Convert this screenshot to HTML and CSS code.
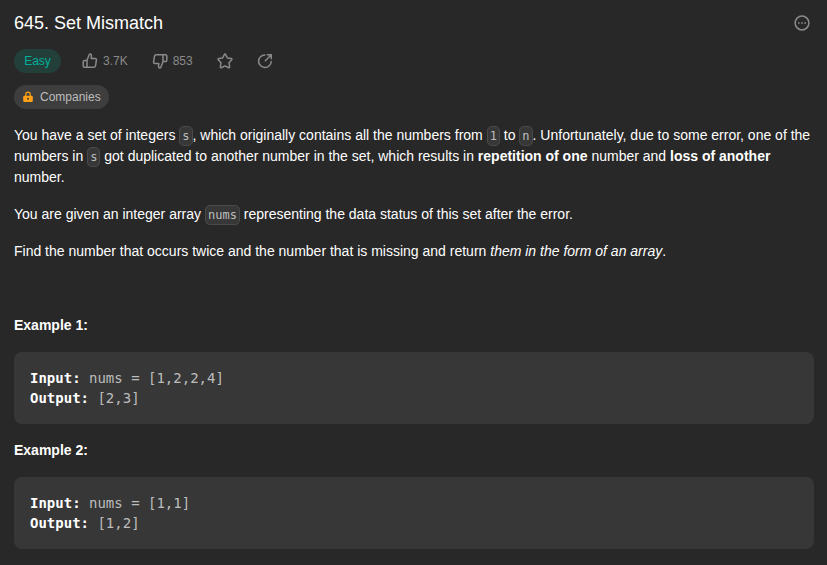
FILE: index.html
```
<!DOCTYPE html>
<html lang="en">
<head>
<meta charset="utf-8">
<title>645. Set Mismatch</title>
<link rel="stylesheet" href="styles.css">
</head>
<body>
<main class="problem">
  <header class="heading">
    <h1>645. Set Mismatch</h1>
    <svg class="icon" viewBox="0 0 18 18"><circle cx="9" cy="9" r="6.900"/><path class="dots" d="M5 8.200h1.600v1.600H5zM8.200 8.200h1.600v1.600H8.200zM11.400 8.200H13v1.600h-1.600z"/></svg>
  </header>
  <div class="stats">
    <span class="difficulty">Easy</span>
    <span class="stat up"><svg class="icon" viewBox="0 0 18 18"><path d="M6 15.300V8.200L8.300 2.500Q8.700 1.700 9.500 2Q10.600 2.500 10.500 3.800L10.200 6.400H14Q15.700 6.400 15.400 8.200L14.500 13.800Q14.200 15.300 12.800 15.300H3.400Q2.200 15.300 2.200 14.100V9.700Q2.200 8.500 3.400 8.500H6"/></svg>3.7K</span>
    <span class="stat down"><svg class="icon" viewBox="0 0 18 18"><path d="M12 2.700V9.800L9.700 15.500Q9.300 16.300 8.500 16Q7.400 15.500 7.500 14.200L7.800 11.600H4Q2.300 11.600 2.600 9.800L3.500 4.200Q3.800 2.700 5.200 2.700H14.600Q15.800 2.700 15.800 3.900V8.300Q15.800 9.500 14.600 9.500H12"/></svg>853</span>
    <svg class="icon star" viewBox="0 0 18 18"><path d="M8.200 2.800Q9 1.400 9.800 2.800L11.400 6 15 6.600Q16.600 6.900 15.500 8.100L13 10.700 13.600 14.500Q13.800 16.100 12.300 15.500L9 13.900 5.700 15.500Q4.200 16.100 4.400 14.500L5 10.700 2.500 8.100Q1.400 6.900 3 6.600L6.600 6Z"/></svg>
    <svg class="icon share" viewBox="0 0 18 18"><path d="M8.900 2.900A6.300 6.300 0 1 0 15.200 9.400M9.300 8.700 15.300 2.700M11.300 2.700H15.300V6.700"/></svg>
  </div>
  <div class="companies">
    <svg class="lock" viewBox="0 0 12 12"><path d="M3.800 5V3.400a2.200 2.200 0 0 1 4.400 0V5" fill="none" stroke="#ffa116" stroke-width="1.200"/><rect x="1.200" y="4.800" width="9.600" height="6.200" rx="1.200" fill="#ffa116"/><circle cx="6" cy="7.800" r="1" fill="#3e3e3e"/></svg>Companies
  </div>
  <article>
    <p>You have a set of integers <code>s</code>, which originally contains all the numbers from <code>1</code> to <code>n</code>. Unfortunately, due to some error, one of the numbers in <code>s</code> got duplicated to another number in the set, which results in <strong>repetition of one</strong> number and <strong>loss of another</strong> number.</p>
    <p>You are given an integer array <code>nums</code> representing the data status of this set after the error.</p>
    <p>Find the number that occurs twice and the number that is missing and return <em>them in the form of an array</em>.</p>
    <p>&nbsp;</p>
    <p><strong>Example 1:</strong></p>
<pre><strong>Input:</strong> nums = [1,2,2,4]
<strong>Output:</strong> [2,3]</pre>
    <p><strong>Example 2:</strong></p>
<pre><strong>Input:</strong> nums = [1,1]
<strong>Output:</strong> [1,2]</pre>
  </article>
</main>
</body>
</html>
```

FILE: styles.css
```
* { box-sizing: border-box; }
body {
  margin: 0;
  height: 565px;
  overflow: hidden;
  background: #282828;
  color: #fff;
  font: 14px/21px "Liberation Sans", Arial, sans-serif;
}
.problem { padding: 11px 13px 0 14px; }
.heading { display: flex; justify-content: space-between; align-items: center; padding-right: 3px; }
h1 { margin: 0; font-size: 18px; font-weight: 400; line-height: 24px; }
.icon {
  width: 18px;
  height: 18px;
  flex: none;
  fill: none;
  stroke: #8a8a8a;
  stroke-width: 1.5;
  stroke-linecap: round;
  stroke-linejoin: round;
}
.dots { fill: #8a8a8a; stroke: none; }
.stats { display: flex; align-items: center; height: 24px; margin-top: 14px; color: #8a8a8a; font-size: 12px; }
.difficulty {
  width: 47px;
  border-radius: 12px;
  background: #233f3a;
  color: #00af9b;
  line-height: 24px;
  text-align: center;
}
.stat { display: flex; align-items: center; gap: 4px; }
.up { margin-left: 20px; }
.down { margin-left: 23px; }
.star { margin-left: 23px; }
.share { margin-left: 22px; }
.companies {
  display: flex;
  align-items: center;
  width: 95px;
  height: 24px;
  margin-top: 12px;
  padding-left: 8px;
  gap: 6px;
  border-radius: 12px;
  background: #3e3e3e;
  color: #bdbdbd;
  font-size: 12px;
}
.lock { width: 12px; height: 12px; }
article { margin-top: 16px; }
p { margin: 0 0 16px; }
code, pre { font-family: "DejaVu Sans Mono", monospace; }
code {
  padding: 2px;
  border: 1px solid #4a4a4a;
  border-radius: 5px;
  background: #373737;
  color: #bdbdbd;
  font-size: 12px;
  line-height: 1;
}
pre {
  margin: 0 0 16px;
  padding: 16px;
  border-radius: 8px;
  background: #373737;
  color: #bdbdbd;
  font-size: 14px;
  line-height: 20px;
}
pre strong { color: #fff; }
```
